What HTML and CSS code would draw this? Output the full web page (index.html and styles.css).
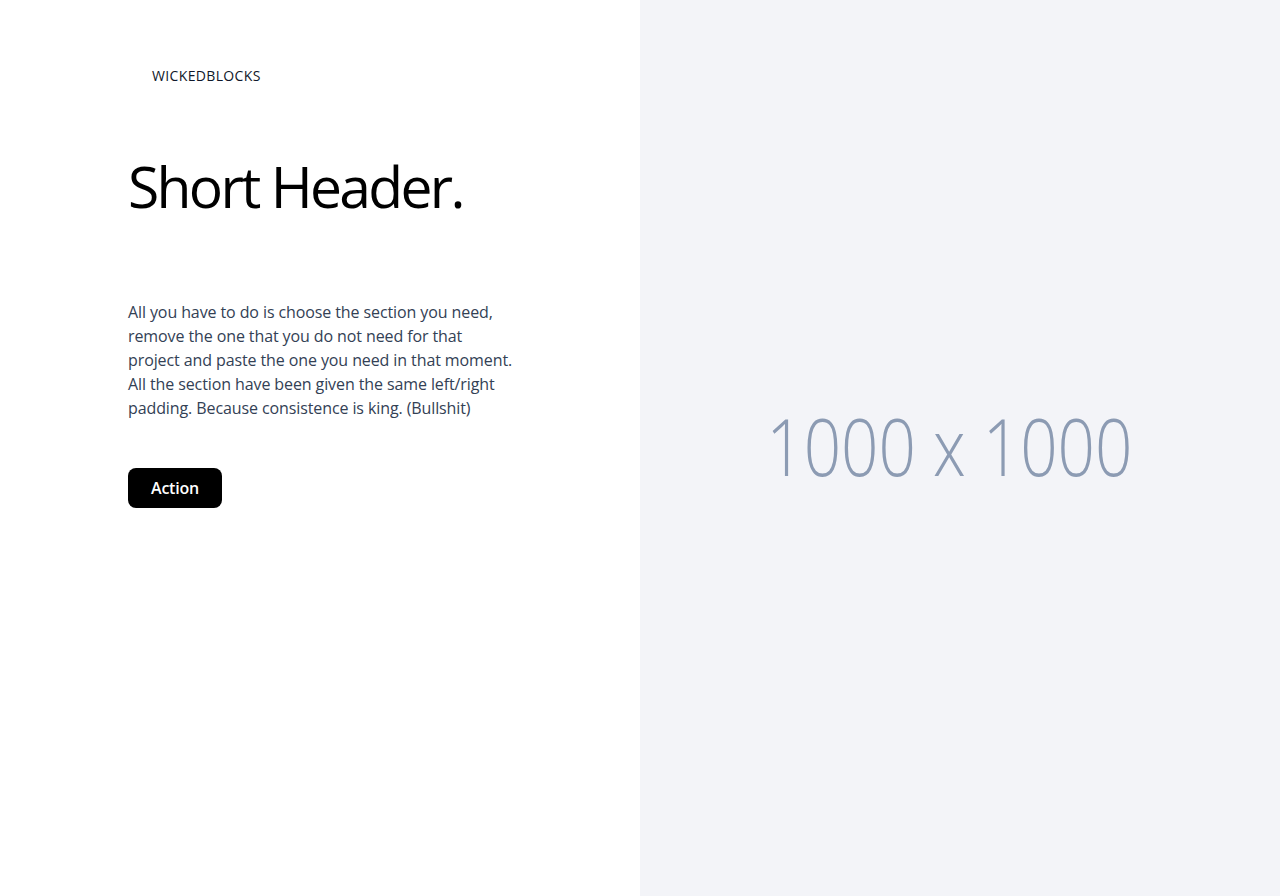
FILE: index.html
```html
<!DOCTYPE html>
<html lang="en">
<head>
<meta charset="utf-8">
<title>Short Header</title>
<link rel="stylesheet" href="styles.css">
</head>
<body>
<main class="hero">
  <section class="left">
    <div class="logo">WICKEDBLOCKS</div>
    <h1 class="title">Short Header.</h1>
    <p class="text">All you have to do is choose the section you need, remove the one that you do not need for that project and paste the one you need in that moment. All the section have been given the same left/right padding. Because consistence is king. (Bullshit)</p>
    <div class="actions"><a class="btn" href="#">Action</a></div>
  </section>
  <section class="right">
    <span class="ph">1000 x 1000</span>
  </section>
</main>
</body>
</html>
```
FILE: styles.css
```css
* { box-sizing: border-box; }
html, body { margin: 0; padding: 0; }
body { font-family: "Open Sans", "Noto Sans", sans-serif; background: #fff; }
.hero { display: grid; grid-template-columns: 640px 640px; height: 896px; }
.left { padding: 66px 0 0 128px; display: flex; flex-direction: column; }
.logo { padding-left: 24px; font-size: 14px; line-height: 20px; color: #0f172a; font-weight: 500; letter-spacing: 0.35px; }
.title { margin: 68px 0 0; font-size: 57px; line-height: 64px; font-weight: 500; color: #000; letter-spacing: -2.7px; }
.text { margin: 82px 0 0; width: 388px; font-size: 16px; line-height: 24px; color: #334155; font-weight: 500; letter-spacing: -0.1px; }
.actions { margin-top: 48px; }
.btn { display: inline-flex; align-items: center; height: 40px; padding: 0 23px; background: #000; color: #fff; border-radius: 8px; font-size: 16px; font-weight: 600; letter-spacing: -0.2px; text-decoration: none; }
.right { background: #f3f4f8; display: flex; align-items: center; justify-content: center; }
.ph { font-size: 80px; font-weight: 300; color: #8c9bb3; display: inline-block; transform: scaleX(0.82); margin: 0 22px 8px 0; }
```
